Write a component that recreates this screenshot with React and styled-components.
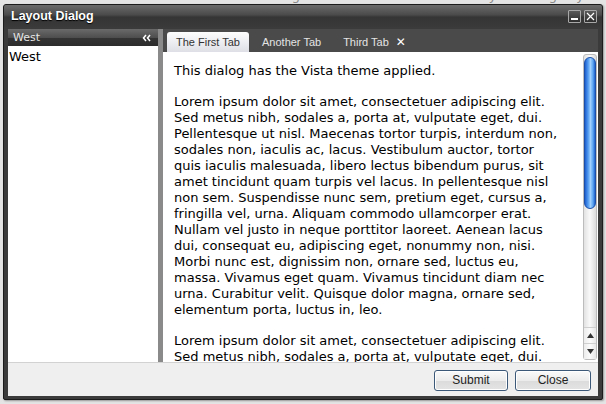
import React from "react";
import styled, { createGlobalStyle } from "styled-components";

const Global = createGlobalStyle`
  html, body { margin: 0; padding: 0; }
  body { background: #e4e4e4; overflow: hidden; font-family: "DejaVu Sans", Verdana, sans-serif; }
`;

const Page = styled.div`
  width: 606px;
  height: 404px;
  position: relative;
  overflow: hidden;
`;

const BackText = styled.div`
  height: 4px;
  overflow: hidden;
  position: relative;
  span {
    position: absolute;
    left: -6px;
    top: -12px;
    white-space: nowrap;
    font: 13px "DejaVu Sans", sans-serif;
    color: #8a8a8a;
  }
`;

const Dialog = styled.div`
  margin-left: 3px;
  width: 600px;
  height: 396px;
  box-sizing: border-box;
  border: 1px solid #1c1c1c;
  border-radius: 3px 3px 2px 2px;
  background: #3b3b3b;
  display: flex;
  flex-direction: column;
  padding: 0 4px 3px 4px;
  box-shadow: 1px 1px 2px rgba(0,0,0,0.35);
`;

const TitleBar = styled.div`
  height: 22px;
  margin: 0 -4px;
  padding: 0 5px 0 7px;
  display: flex;
  align-items: center;
  justify-content: space-between;
  background: linear-gradient(#6b6b6b 0%, #4a4a4a 45%, #353535 55%, #3a3a3a 100%);
  border-radius: 2px 2px 0 0;
`;

const Title = styled.div`
  font: bold 12.5px "Liberation Sans", Arial, sans-serif;
  color: #fff;
  text-shadow: 0 1px 1px #000;
`;

const WinButtons = styled.div`
  display: flex;
  gap: 3px;
`;

const WinButton = styled.div`
  width: 11px;
  height: 11px;
  border: 1px solid #a8a8a8;
  border-radius: 1px;
  background: linear-gradient(#5a5a5a, #2e2e2e);
  display: flex;
  align-items: center;
  justify-content: center;
`;

const Body = styled.div`
  flex: 1;
  display: flex;
  padding-top: 2px;
  min-height: 0;
`;

const West = styled.div`
  width: 150px;
  display: flex;
  flex-direction: column;
`;

const WestHeader = styled.div`
  height: 17px;
  display: flex;
  align-items: center;
  justify-content: space-between;
  padding: 0 7px 0 5px;
  background: linear-gradient(#6a6a6a 0%, #4e4e4e 50%, #333 55%, #2c2c2c 100%);
  font: 11px "DejaVu Sans", sans-serif;
  color: #e6e6e6;
`;

const Collapse = styled.span`
  display: flex;
  align-items: center;
`;

const WestBody = styled.div`
  flex: 1;
  background: #fff;
  padding: 3px 1px;
  font: 13px "DejaVu Sans", Verdana, sans-serif;
  color: #000;
`;

const Splitter = styled.div`
  width: 5px;
  background: #8a8a8a;
`;

const Center = styled.div`
  flex: 1;
  display: flex;
  flex-direction: column;
  min-width: 0;
`;

const TabStrip = styled.div`
  height: 23px;
  background: #4a4a4a;
  display: flex;
  align-items: flex-end;
  padding-left: 4px;
`;

const Tab = styled.div`
  height: 20px;
  box-sizing: border-box;
  padding: 0 9px;
  margin-right: 4px;
  display: flex;
  align-items: center;
  gap: 7px;
  font: 11px "Liberation Sans", Tahoma, sans-serif;
  color: ${p => (p.$active ? "#333" : "#e4e4e4")};
  border-radius: 3px 3px 0 0;
  background: ${p => (p.$active ? "linear-gradient(#fdfdfd, #dedfe6)" : "transparent")};
`;

const TabClose = styled.span`
  font: bold 12px "DejaVu Sans", sans-serif;
  color: #fff;
`;

const ContentWrap = styled.div`
  flex: 1;
  background: #fff;
  display: flex;
  min-height: 0;
  overflow: hidden;
`;

const Text = styled.div`
  flex: 1;
  padding: 11px 0 0 11px;
  font: 13px "DejaVu Sans", Verdana, sans-serif;
  line-height: 16px;
  color: #000;
  white-space: nowrap;
  overflow: hidden;
  p { margin: 0 0 15px; }
`;

const Scrollbar = styled.div`
  width: 14px;
  margin: 2px 1px 2px 0;
  display: flex;
  flex-direction: column;
  background: linear-gradient(90deg, #e2e2e2, #fafafa 50%, #dcdcdc);
  border: 1px solid #bcbcbc;
  border-radius: 3px;
  box-sizing: border-box;
`;

const Track = styled.div`
  flex: 1;
  padding-top: 2px;
`;

const Thumb = styled.div`
  height: 152px;
  border-radius: 7px;
  border: 1px solid #1b4fa8;
  background: linear-gradient(90deg, #1d5fcf 0%, #4f99f0 30%, #9fd0ff 55%, #5aa3f2 80%, #1f62cf 100%);
  box-sizing: border-box;
`;

const Arrow = styled.div`
  height: 15px;
  display: flex;
  align-items: center;
  justify-content: center;
  border-top: 1px solid #cfcfcf;
  background: linear-gradient(90deg, #ececec, #fbfbfb 50%, #e6e6e6);
`;

const Footer = styled.div`
  height: 34px;
  background: #efefef;
  display: flex;
  align-items: center;
  justify-content: flex-end;
  gap: 7px;
  padding-right: 7px;
  border-top: 1px solid #d2d2d2;
  box-sizing: border-box;
`;

const Button = styled.div`
  width: ${p => p.$w}px;
  height: 21px;
  margin-top: 1px;
  box-sizing: border-box;
  display: flex;
  align-items: center;
  justify-content: center;
  border: 1px solid #3c5878;
  border-radius: 3px;
  background: linear-gradient(#fafafa 0%, #ececec 50%, #dcdcdc 55%, #e4e4e4 100%);
  font: 12px "Liberation Sans", Tahoma, sans-serif;
  color: #222;
  box-shadow: inset 0 0 0 1px #fff;
`;

const p2 = [
  "Lorem ipsum dolor sit amet, consectetuer adipiscing elit.",
  "Sed metus nibh, sodales a, porta at, vulputate eget, dui.",
  "Pellentesque ut nisl. Maecenas tortor turpis, interdum non,",
  "sodales non, iaculis ac, lacus. Vestibulum auctor, tortor",
  "quis iaculis malesuada, libero lectus bibendum purus, sit",
  "amet tincidunt quam turpis vel lacus. In pellentesque nisl",
  "non sem. Suspendisse nunc sem, pretium eget, cursus a,",
  "fringilla vel, urna. Aliquam commodo ullamcorper erat.",
  "Nullam vel justo in neque porttitor laoreet. Aenean lacus",
  "dui, consequat eu, adipiscing eget, nonummy non, nisi.",
  "Morbi nunc est, dignissim non, ornare sed, luctus eu,",
  "massa. Vivamus eget quam. Vivamus tincidunt diam nec",
  "urna. Curabitur velit. Quisque dolor magna, ornare sed,",
  "elementum porta, luctus in, leo.",
];

const Lines = ({ lines }) => (
  <p>
    {lines.map((l, i) => (
      <React.Fragment key={i}>
        {l}
        {i < lines.length - 1 && <br />}
      </React.Fragment>
    ))}
  </p>
);

export default function App() {
  return (
    <>
      <Global />
      <Page>
        <BackText>
          <span>This demo shows how to create a modal dialog with an embedded border layout using LayoutDialog.</span>
        </BackText>
        <Dialog>
          <TitleBar>
            <Title>Layout Dialog</Title>
            <WinButtons>
              <WinButton>
                <svg width="9" height="9" viewBox="0 0 9 9">
                  <rect x="1" y="6" width="7" height="2" fill="#fff" />
                </svg>
              </WinButton>
              <WinButton>
                <svg width="9" height="9" viewBox="0 0 9 9">
                  <path d="M1 1 L8 8 M8 1 L1 8" stroke="#fff" strokeWidth="1.2" />
                </svg>
              </WinButton>
            </WinButtons>
          </TitleBar>
          <Body>
            <West>
              <WestHeader>
                <span>West</span>
                <Collapse>
                  <svg width="9" height="8" viewBox="0 0 9 8">
                    <path d="M4 1 L1.5 4 L4 7 M8 1 L5.5 4 L8 7" stroke="#fff" strokeWidth="1.5" fill="none" />
                  </svg>
                </Collapse>
              </WestHeader>
              <WestBody>West</WestBody>
            </West>
            <Splitter />
            <Center>
              <TabStrip>
                <Tab $active>The First Tab</Tab>
                <Tab>Another Tab</Tab>
                <Tab>
                  Third Tab
                  <TabClose>✕</TabClose>
                </Tab>
              </TabStrip>
              <ContentWrap>
                <Text>
                  <p>This dialog has the Vista theme applied.</p>
                  <Lines lines={p2} />
                  <Lines lines={p2} />
                </Text>
                <Scrollbar>
                  <Track>
                    <Thumb />
                  </Track>
                  <Arrow>
                    <svg width="7" height="5" viewBox="0 0 7 5"><path d="M0 5 L3.5 0 L7 5 Z" fill="#333" /></svg>
                  </Arrow>
                  <Arrow>
                    <svg width="7" height="5" viewBox="0 0 7 5"><path d="M0 0 L3.5 5 L7 0 Z" fill="#333" /></svg>
                  </Arrow>
                </Scrollbar>
              </ContentWrap>
            </Center>
          </Body>
          <Footer>
            <Button $w={74}>Submit</Button>
            <Button $w={76}>Close</Button>
          </Footer>
        </Dialog>
      </Page>
    </>
  );
}
